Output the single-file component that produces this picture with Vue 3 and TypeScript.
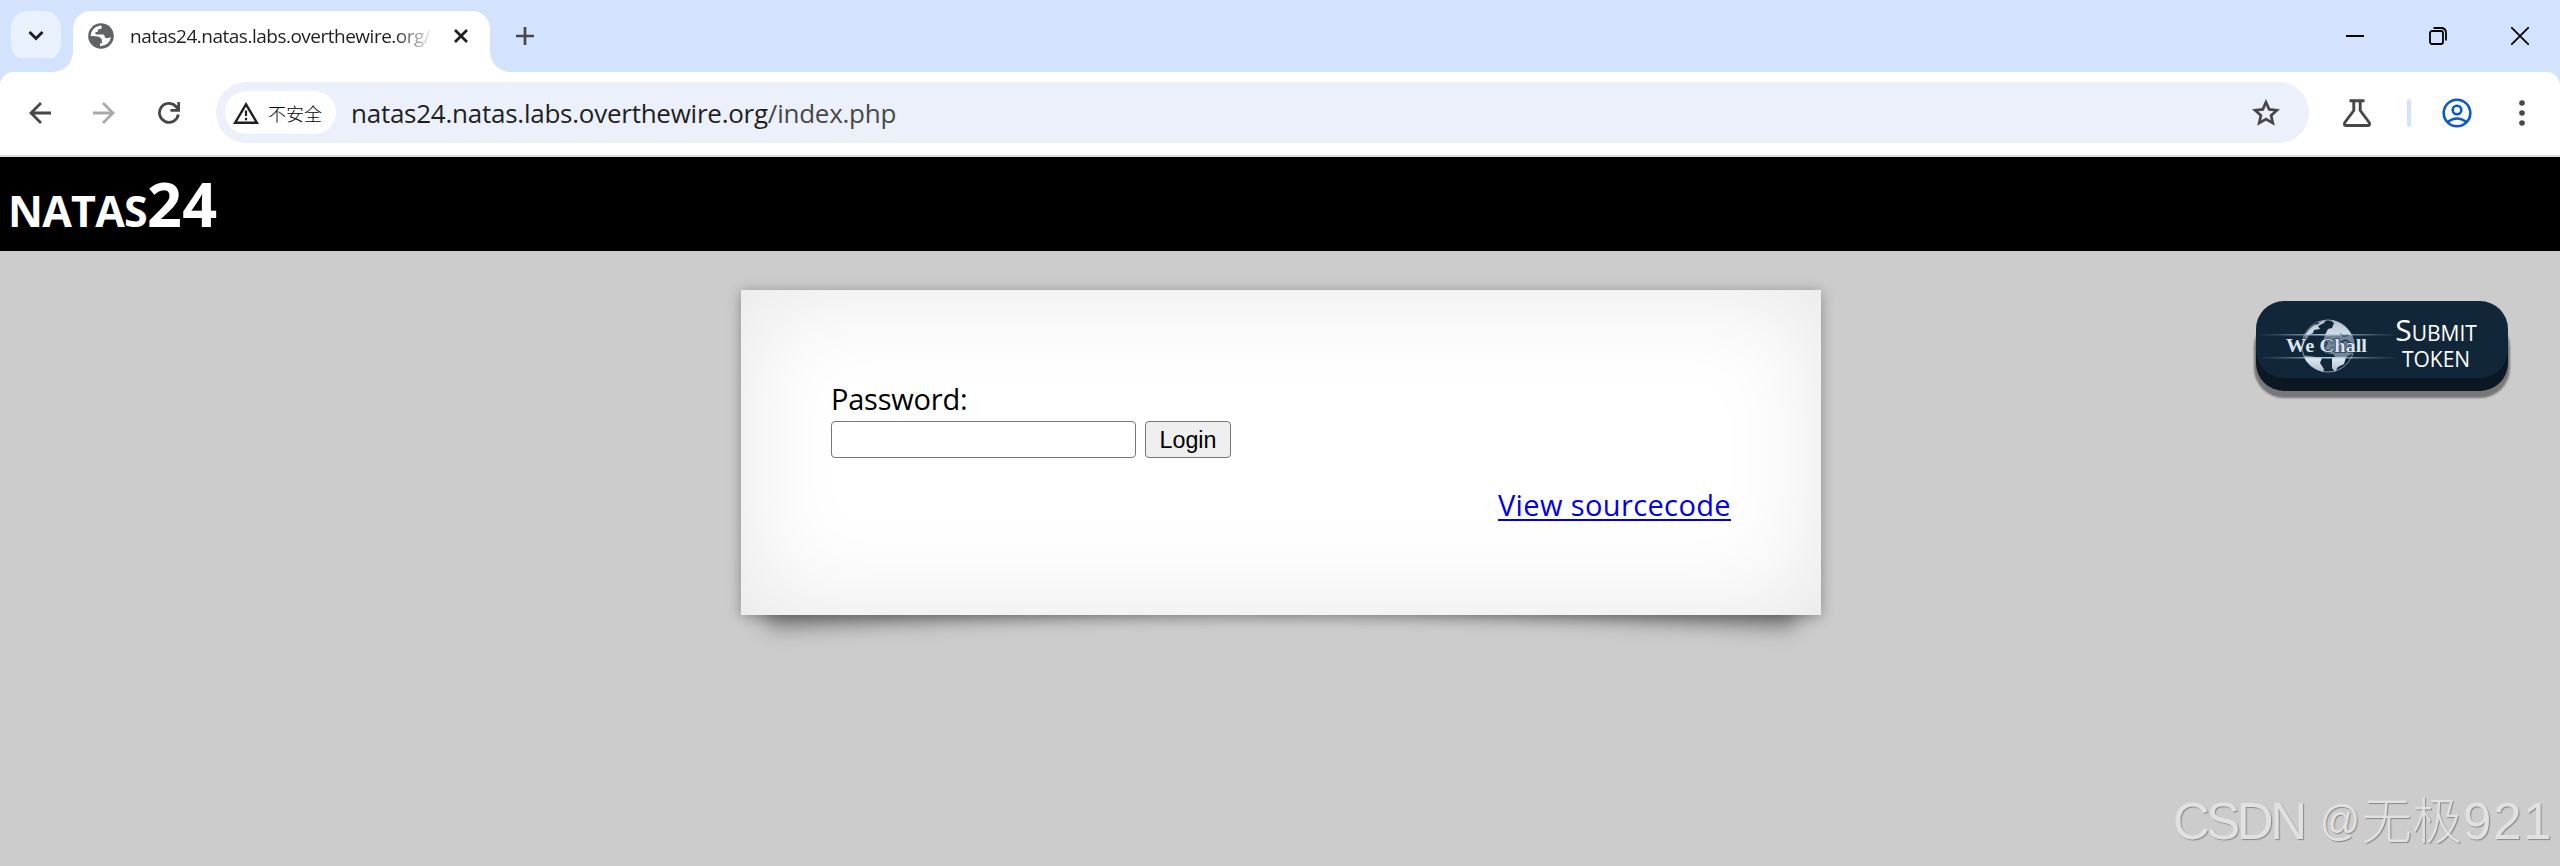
<script setup lang="ts">
import { ref } from 'vue'

const password = ref<string>('')
const host = 'natas24.natas.labs.overthewire.org'
const path = '/index.php'
</script>

<template>
  <div class="browser">
    <header class="tabstrip">
      <button class="tab-search" aria-label="Search tabs">
        <svg width="16" height="12" viewBox="0 0 16 12"><path d="M1.500 2l6.500 6.500L14.500 2" fill="none" stroke="#1f1f1f" stroke-width="3" /></svg>
      </button>
      <div class="tab">
        <svg class="favicon" width="26" height="26" viewBox="0 0 26 26">
          <circle cx="13" cy="13" r="12.800" fill="#5f6368" />
          <path fill="#fff" d="M2.600 13Q2.800 5 12 2.600L14 3.500 13 6h-1.800Q9.500 6.500 9.600 9H7.500V11.500H15.500Q17 12 17 15h3.500l2.500-1Q21.500 22.500 12 23.200V20.300h2V18.500Q14 13.500 8 13.300z" />
        </svg>
        <span class="tab-title">{{ host }}/</span>
        <svg class="tab-close" width="16" height="16" viewBox="0 0 16 16"><path d="M2 2l12 12M14 2L2 14" stroke="#1f1f1f" stroke-width="2.800" /></svg>
      </div>
      <svg class="new-tab" width="20" height="20" viewBox="0 0 20 20"><path d="M10 1v18M1 10h18" stroke="#474747" stroke-width="2.700" /></svg>
      <div class="window-controls">
        <svg width="18" height="18" viewBox="0 0 18 18"><path d="M0 9h18" stroke="#000" stroke-width="2" /></svg>
        <svg width="18" height="18" viewBox="0 0 18 18" fill="none" stroke="#000" stroke-width="1.800"><rect x="1" y="4" width="13" height="13" rx="2" /><path d="M4.500 1H12q5 0 5 5v7.500" /></svg>
        <svg width="18" height="18" viewBox="0 0 18 18"><path d="M0 0l18 18M18 0L0 18" stroke="#000" stroke-width="1.800" /></svg>
      </div>
    </header>

    <nav class="toolbar">
      <svg class="back" width="22" height="22" viewBox="0 0 22 22" fill="none" stroke="#474747" stroke-width="2.800"><path d="M22 11H2M12 1L2 11l10 10" /></svg>
      <svg class="forward" width="22" height="22" viewBox="0 0 22 22" fill="none" stroke="#a9a9a9" stroke-width="2.800"><path d="M0 11h20M10 1l10 10-10 10" /></svg>
      <svg class="reload" width="22" height="22" viewBox="0 0 22 22" fill="none" stroke="#474747" stroke-width="2.800"><path d="M20.300 12.500A9.500 9.500 0 1 1 18 4.500l2.500 3M20.700 0v8.300H12.500" /></svg>
      <div class="omnibox">
        <div class="security">
          <svg width="26" height="22" viewBox="0 0 26 22" fill="none" stroke="#1f1f1f" stroke-width="2.400"><path d="M13 2.400L2.100 20.700h21.800z" /><path d="M13 8.500v5.500M13 15.800v2.500" stroke-width="2.200" /></svg>
          <span>不安全</span>
        </div>
        <span class="url">{{ host }}<span class="url-path">{{ path }}</span></span>
        <svg class="star" width="28" height="27" viewBox="0 0 28 27"><path d="M14 3.200l3.200 7.200 7.700.8-5.800 5.200 1.700 7.700-6.800-4-6.800 4 1.700-7.700-5.800-5.200 7.700-.8z" fill="none" stroke="#474747" stroke-width="2.700" /></svg>
      </div>
      <svg class="flask" width="28" height="28" viewBox="0 0 28 28" fill="none" stroke="#474747" stroke-width="2.900" stroke-linejoin="round"><path d="M6.500 1.700h15M10.800 1.700v9.800L1.800 23.500q-1 3 1 3h22.400q2 0 1-3L17.200 11.500v-9.800" /></svg>
      <span class="divider"></span>
      <svg class="profile" width="30" height="30" viewBox="0 0 30 30" fill="none" stroke="#0b57d0" stroke-width="2.600"><circle cx="15" cy="15" r="13.300" /><circle cx="15" cy="12" r="4.300" /><path d="M5.500 24q9.500-7 19 0" /></svg>
      <svg class="menu" width="6" height="26" viewBox="0 0 6 26" fill="#474747"><circle cx="3" cy="3" r="2.800" /><circle cx="3" cy="13" r="2.800" /><circle cx="3" cy="23" r="2.800" /></svg>
    </nav>

    <main class="page">
      <h1><span class="level-name">NATAS</span><span class="level-number">24</span></h1>
      <section class="content">
        <form @submit.prevent>
          <label for="password">Password:</label>
          <div class="fields">
            <input id="password" v-model="password" type="text" />
            <button class="login" type="submit">Login</button>
          </div>
        </form>
        <div class="source"><a href="#">View sourcecode</a></div>
      </section>

      <button class="wechall">
        <svg class="wechall-logo" width="140" height="56" viewBox="0 0 140 56">
          <defs>
            <linearGradient id="globe" gradientUnits="userSpaceOnUse" x1="0" y1="2" x2="0" y2="54"><stop offset="0" stop-color="#b4c0ce" /><stop offset=".28" stop-color="#d3dee9" /><stop offset=".29" stop-color="#71849a" /><stop offset=".7" stop-color="#71849a" /><stop offset=".72" stop-color="#e2edf5" /><stop offset="1" stop-color="#aebbc8" /></linearGradient>
            <linearGradient id="beam"><stop offset="0" stop-color="#7ca4bc" stop-opacity="0" /><stop offset=".5" stop-color="#b3d0e2" /><stop offset="1" stop-color="#7ca4bc" stop-opacity="0" /></linearGradient>
          </defs>
          <circle cx="70" cy="28" r="26" fill="none" stroke="#8796a8" stroke-width="1" />
          <path d="M72 2Q89 4 96 22l1 8-3 6-8 4h-8l-3-4-8-1-5-7 4-8 2-5 2-4 4-1 2-5zM45 22Q51 6 68 2l-2 3-6 3 2 3-6 1-1 3-4 2-3 6zM45 37l19 3-2 5 4 6-1 3Q50 50 45 37zM74 39h14l-2 7-6 3-3 5-3-4z" fill="url(#globe)" />
          <path d="M82 16l4 2 5-1M83 24l5-2 4 3M66 22l3 3-2 4M57 6l4-1" fill="none" stroke="#1d3247" stroke-width="1.500" />
          <rect x="0" y="16" width="140" height="1.500" fill="url(#beam)" />
          <rect x="0" y="39" width="140" height="1.500" fill="url(#beam)" />
          <text x="28" y="34" textLength="81" lengthAdjust="spacingAndGlyphs">We Chall</text>
        </svg>
        <span class="submit"><span class="first">S</span>UBMIT<br />TOKEN</span>
      </button>
      <div class="watermark"><span class="mark-site">CSDN</span> <span class="mark-at">@</span><span class="mark-name">无极</span><span class="mark-digits">921</span></div>
    </main>
  </div>
</template>

<style>
html, body { margin: 0; background: #ccc; }
</style>

<style scoped>
.browser {
  width: 2560px;
  height: 866px;
  overflow: hidden;
  font-family: "Open Sans", "Noto Sans", "Noto Sans CJK SC", sans-serif;
  background: #ccc;
}
.browser * { box-sizing: border-box; }
svg { display: block; flex: none; }
button { padding: 0; }
.tabstrip { height: 72px; display: flex; background: #d3e3fd; }
.tab-search {
  width: 50px; height: 50px; margin: 11px 0 0 11px; border: 0; border-radius: 17px;
  background: #e9f1fe; display: flex; align-items: center; justify-content: center;
}
.tab {
  position: relative; z-index: 1; width: 417px; height: 61px; margin: 11px 0 0 12px; padding: 0 21px 12px 15px;
  border-radius: 18px 18px 0 0; background: #fff; display: flex; align-items: center;
}
.tab::before, .tab::after {
  content: ""; position: absolute; bottom: 0; width: 20px; height: 20px;
}
.tab::before { left: -20px; background: radial-gradient(circle at 0 0, transparent 19.500px, #fff 20px); }
.tab::after { right: -20px; background: radial-gradient(circle at 100% 0, transparent 19.500px, #fff 20px); }
.tab-title {
  width: 302px; margin-left: 16px; overflow: hidden; white-space: nowrap;
  font-size: 19px; letter-spacing: -0.500px; color: #1f1f1f;
  mask-image: linear-gradient(90deg, #000 265px, transparent 304px);
}
.tab-close { margin-left: auto; }
.new-tab { margin: 26px 0 0 25px; }
.window-controls { display: flex; gap: 64.500px; margin: 27px 31px 0 auto; }
.toolbar {
  position: relative; height: 85px; display: flex; align-items: center; padding: 0 35px 2px 29px;
  border-bottom: 2px solid #dedede; background: #fff; border-radius: 14px 14px 0 0;
  box-shadow: 0 -14px 0 #d3e3fd;
}
.forward { margin-left: 42px; }
.reload { margin-left: 43px; }
.omnibox {
  width: 2093px; height: 61px; margin-left: 36px; padding: 0 29px 0 9px;
  display: flex; align-items: center; border-radius: 31px; background: #ebf0fa;
}
.security {
  width: 111px; height: 43px; padding-left: 8px; display: flex; align-items: center; gap: 9px;
  border-radius: 22px; background: #fff; color: #000;
  font: 300 18px "Noto Sans CJK SC", sans-serif;
}
.url { margin-left: 15px; font-size: 26px; letter-spacing: -0.250px; color: #1f1f1f; white-space: nowrap; }
.url-path { color: #474747; }
.star { margin-left: auto; }
.flask { margin-left: 34px; }
.divider { width: 4px; height: 28px; margin-left: 36px; border-radius: 2px; background: #d3e3fd; }
.profile { margin-left: 31px; }
.menu { margin-left: 47px; }
.page { position: relative; z-index: 0; height: 709px; }
h1 {
  height: 94px; margin: 0; padding: 0 0 0 8px; background: #000; color: #fff;
  display: flex; align-items: baseline; line-height: 93px; font-weight: 700;
}
.level-name { font-size: 43px; letter-spacing: -0.800px; }
.level-number { font-size: 61px; letter-spacing: 0.500px; }
.content {
  position: relative; width: 1080px; height: 325px; margin: 39px 0 0 741px; padding: 90px;
  background: #fff; box-shadow: 0 2px 13px rgba(0, 0, 0, .32), inset 0 0 105px rgba(0, 0, 0, .1);
}
.content::before, .content::after {
  content: ""; position: absolute; z-index: -1; bottom: 26px; width: 50%; height: 20%;
  box-shadow: 0 25px 21px rgba(0, 0, 0, .38);
}
.content::before { left: 14px; transform: skew(8deg) rotate(-3deg); }
.content::after { right: 14px; transform: skew(-8deg) rotate(3deg); }
label { display: block; height: 41px; line-height: 37px; font-size: 29px; letter-spacing: -0.220px; }
.fields { display: flex; gap: 9px; }
input { width: 305px; height: 37px; border: 1px solid #767676; border-radius: 4px; background: #fff; }
.login {
  width: 86px; height: 37px; padding-top: 1px; border: 1px solid #767676; border-radius: 4px; background: #efefef; color: #000;
  font: 23.300px "Liberation Sans", Arial, sans-serif;
}
.source { margin-top: 26px; text-align: right; line-height: 42px; font-size: 29px; letter-spacing: 0.380px; }
.source a { color: #00e; text-decoration-thickness: 2px; text-underline-offset: 3px; }
.wechall {
  position: absolute; left: 2256px; top: 144px; width: 252px; height: 77px; border: 0; border-radius: 28px;
  display: flex; align-items: flex-start; justify-content: flex-start; background: #12263a; color: #fff;
  box-shadow: 0 13px 0 #0b1722, 0 18px 2px 2px #777;
}
.wechall-logo { margin: 17px 0 0 2px; }
.wechall-logo text { font: 700 19px "Liberation Serif", serif; fill: #dae4ef; stroke: #12263a; stroke-width: 1.200px; paint-order: stroke; }
.submit { margin: 16px 0 0 -4px; width: 84px; font: 21px/26px "Open Sans", sans-serif; text-align: center; white-space: nowrap; }
.first { font-size: 30px; }
.watermark {
  position: absolute; left: 2173px; top: 628px; display: flex; align-items: baseline;
  white-space: nowrap; line-height: 64px; color: #e1e1e1; text-shadow: 1px 1px 1px #888;
  font-family: "Liberation Sans", "Noto Sans CJK SC", sans-serif; font-size: 51px; font-weight: 300;
}
.mark-site { width: 147px; letter-spacing: -3.500px; }
.mark-at { width: 42px; font-size: 42px; line-height: 50px; transform: translateY(-4px) scaleX(.94); transform-origin: left; }
.mark-name { width: 101px; font-family: "Noto Sans CJK SC", sans-serif; font-size: 50px; }
.mark-digits { letter-spacing: 1.800px; }
</style>
